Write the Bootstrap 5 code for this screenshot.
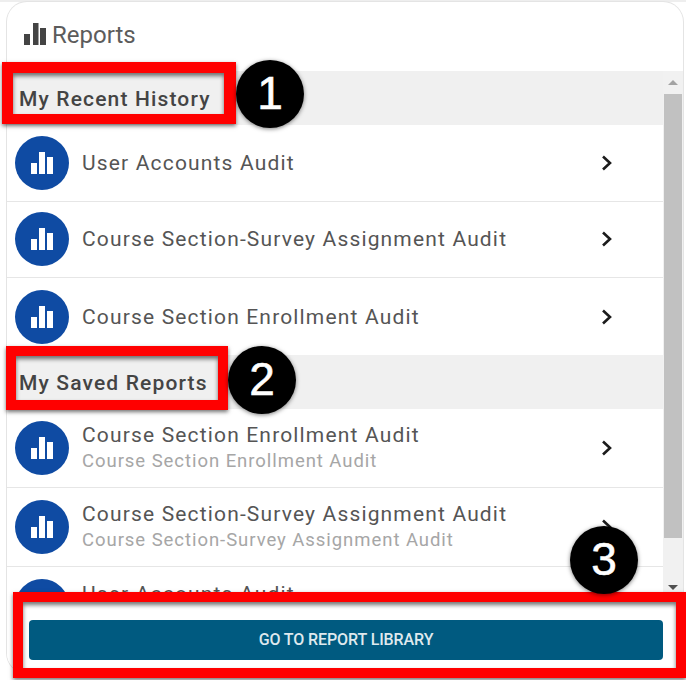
<!DOCTYPE html>
<html lang="en">
<head>
<meta charset="utf-8">
<title>Reports</title>
<link rel="stylesheet" href="https://cdn.jsdelivr.net/npm/bootstrap@5.3.0/dist/css/bootstrap.min.css">
<style>
html,body{height:680px;overflow:hidden}
body{background:#fff;font-family:Roboto,"Liberation Sans",sans-serif;position:relative;padding:2px 3px 7px 7px;box-shadow:inset 0 2px 0 #eee}
.rep-card{height:671px;border:0;box-shadow:0 0 0 1px #e4e4e4;border-radius:20px;overflow:hidden;position:relative}
.rep-head{height:69px;padding:0 17px 4px;gap:5px;font-size:24px;color:#5c5c5c;flex:none}
.rep-scroll{flex:1 1 auto;min-height:0;overflow:hidden;position:relative}
.rep-section{height:54px;background:#f0f0f0;padding:4px 0 0 12px;font-size:21px;font-weight:500;letter-spacing:1.15px;color:#444}
.rep-row{height:76.67px;padding:0 0 0 8px;border:0;border-bottom:1px solid #e6e6e6;border-radius:0!important;gap:14px;color:#555}
.rep-row.rep-tall{height:79px}
.rep-row.rep-last{border-bottom:0}
.rep-circle{width:54px;height:54px;flex:none;display:block}
.rep-title{font-size:21px;letter-spacing:1.16px;line-height:26px;color:#555;margin-left:-1px}
.rep-twoline{padding-bottom:2px}
.rep-clipped{padding-bottom:25px}
.rep-sub{font-size:18.5px;letter-spacing:.95px;line-height:22px;margin-top:2px;color:#a6a6a6;margin-left:-1px}
.rep-chev{position:absolute;left:594px;top:50%;margin-top:-9px;width:12px;height:18px}
.rep-track{position:absolute;top:0;right:0;width:20px;height:100%;background:#f1f1f1}
.rep-thumb{position:absolute;left:1px;top:23px;width:18px;height:444px;background:#c1c1c1}
.rep-arrow{position:absolute;left:5px;width:0;height:0;border-left:5px solid transparent;border-right:5px solid transparent}
.rep-up{top:9px;border-bottom:5px solid #a3a3a3}
.rep-down{bottom:10px;border-top:5px solid #505050}
.rep-foot{flex:none;height:73px;padding:20px 20px 0 22px;background:#fff}
.rep-btn{height:40px;width:100%;background:#005a80;border:0;border-radius:4px;color:#dfe9ee;font-size:16px;font-weight:500;letter-spacing:-.1px;padding:0}
.mark-box{position:absolute;border-style:solid;border-color:#f00;box-shadow:0 2px 4px rgba(0,0,0,.55),inset 0 3px 4px rgba(0,0,0,.55);z-index:5}
.mark-one{left:2px;top:62px;width:234px;height:62px;border-width:11px 12px 10px 11px}
.mark-two{left:6px;top:346px;width:222px;height:64px;border-width:10px}
.mark-three{left:13px;top:592px;width:673px;height:86px;border-width:10px}
.mark-num{position:absolute;width:68px;height:68px;border-radius:50%;background:#000;color:#fff;font-family:"Liberation Sans",sans-serif;font-size:46px;line-height:66px;text-align:center;-webkit-text-stroke:.6px #fff;box-shadow:0 1px 4px rgba(0,0,0,.5);z-index:6}
.num-one{left:236px;top:60px}
.num-two{left:228px;top:346px}
.num-three{left:570px;top:526px}
</style>
</head>
<body>
<svg width="0" height="0" class="position-absolute">
  <symbol id="chart-badge" viewBox="0 0 54 54">
    <circle cx="27" cy="27" r="27" fill="#0f4ba3"/>
    <rect x="16" y="27" width="6" height="11" fill="#fff"/>
    <rect x="24" y="16" width="6" height="22" fill="#fff"/>
    <rect x="32" y="21" width="6" height="17" fill="#fff"/>
  </symbol>
  <symbol id="chev" viewBox="0 0 12 18">
    <path d="M2 2.5 9 9 2 15.5" fill="none" stroke="#1c1c1c" stroke-width="2.6"/>
  </symbol>
</svg>

<div class="card rep-card d-flex flex-column">
  <div class="rep-head d-flex align-items-center">
    <svg width="23" height="23" viewBox="0 0 23 23" fill="#444"><rect x="0" y="11" width="6" height="11"/><rect x="9" y="0" width="5.5" height="22"/><rect x="16" y="5" width="6" height="17"/></svg>
    <span>Reports</span>
  </div>
  <div class="rep-scroll">
    <div class="rep-section d-flex align-items-center">My Recent History</div>
    <div class="list-group list-group-flush">
      <a class="list-group-item rep-row d-flex align-items-center position-relative"><svg class="rep-circle"><use href="#chart-badge"/></svg><div class="rep-title">User Accounts Audit</div><svg class="rep-chev"><use href="#chev"/></svg></a>
      <a class="list-group-item rep-row d-flex align-items-center position-relative"><svg class="rep-circle"><use href="#chart-badge"/></svg><div class="rep-title">Course Section-Survey Assignment Audit</div><svg class="rep-chev"><use href="#chev"/></svg></a>
      <a class="list-group-item rep-row rep-last d-flex align-items-center position-relative"><svg class="rep-circle"><use href="#chart-badge"/></svg><div class="rep-title">Course Section Enrollment Audit</div><svg class="rep-chev"><use href="#chev"/></svg></a>
    </div>
    <div class="rep-section d-flex align-items-center">My Saved Reports</div>
    <div class="list-group list-group-flush">
      <a class="list-group-item rep-row rep-tall d-flex align-items-center position-relative"><svg class="rep-circle"><use href="#chart-badge"/></svg><div class="rep-twoline"><div class="rep-title">Course Section Enrollment Audit</div><div class="rep-sub">Course Section Enrollment Audit</div></div><svg class="rep-chev"><use href="#chev"/></svg></a>
      <a class="list-group-item rep-row rep-tall d-flex align-items-center position-relative"><svg class="rep-circle"><use href="#chart-badge"/></svg><div class="rep-twoline"><div class="rep-title">Course Section-Survey Assignment Audit</div><div class="rep-sub">Course Section-Survey Assignment Audit</div></div><svg class="rep-chev"><use href="#chev"/></svg></a>
      <a class="list-group-item rep-row rep-tall d-flex align-items-center position-relative"><svg class="rep-circle"><use href="#chart-badge"/></svg><div class="rep-title rep-clipped">User Accounts Audit</div><svg class="rep-chev"><use href="#chev"/></svg></a>
    </div>
    <div class="rep-track"><div class="rep-arrow rep-up"></div><div class="rep-thumb"></div><div class="rep-arrow rep-down"></div></div>
  </div>
  <div class="rep-foot"><button class="btn rep-btn" type="button">GO TO REPORT LIBRARY</button></div>
</div>

<div class="mark-box mark-one"></div>
<div class="mark-num num-one">1</div>
<div class="mark-box mark-two"></div>
<div class="mark-num num-two">2</div>
<div class="mark-box mark-three"></div>
<div class="mark-num num-three">3</div>
<script src="https://cdn.jsdelivr.net/npm/bootstrap@5.3.0/dist/js/bootstrap.bundle.min.js"></script>
</body>
</html>
